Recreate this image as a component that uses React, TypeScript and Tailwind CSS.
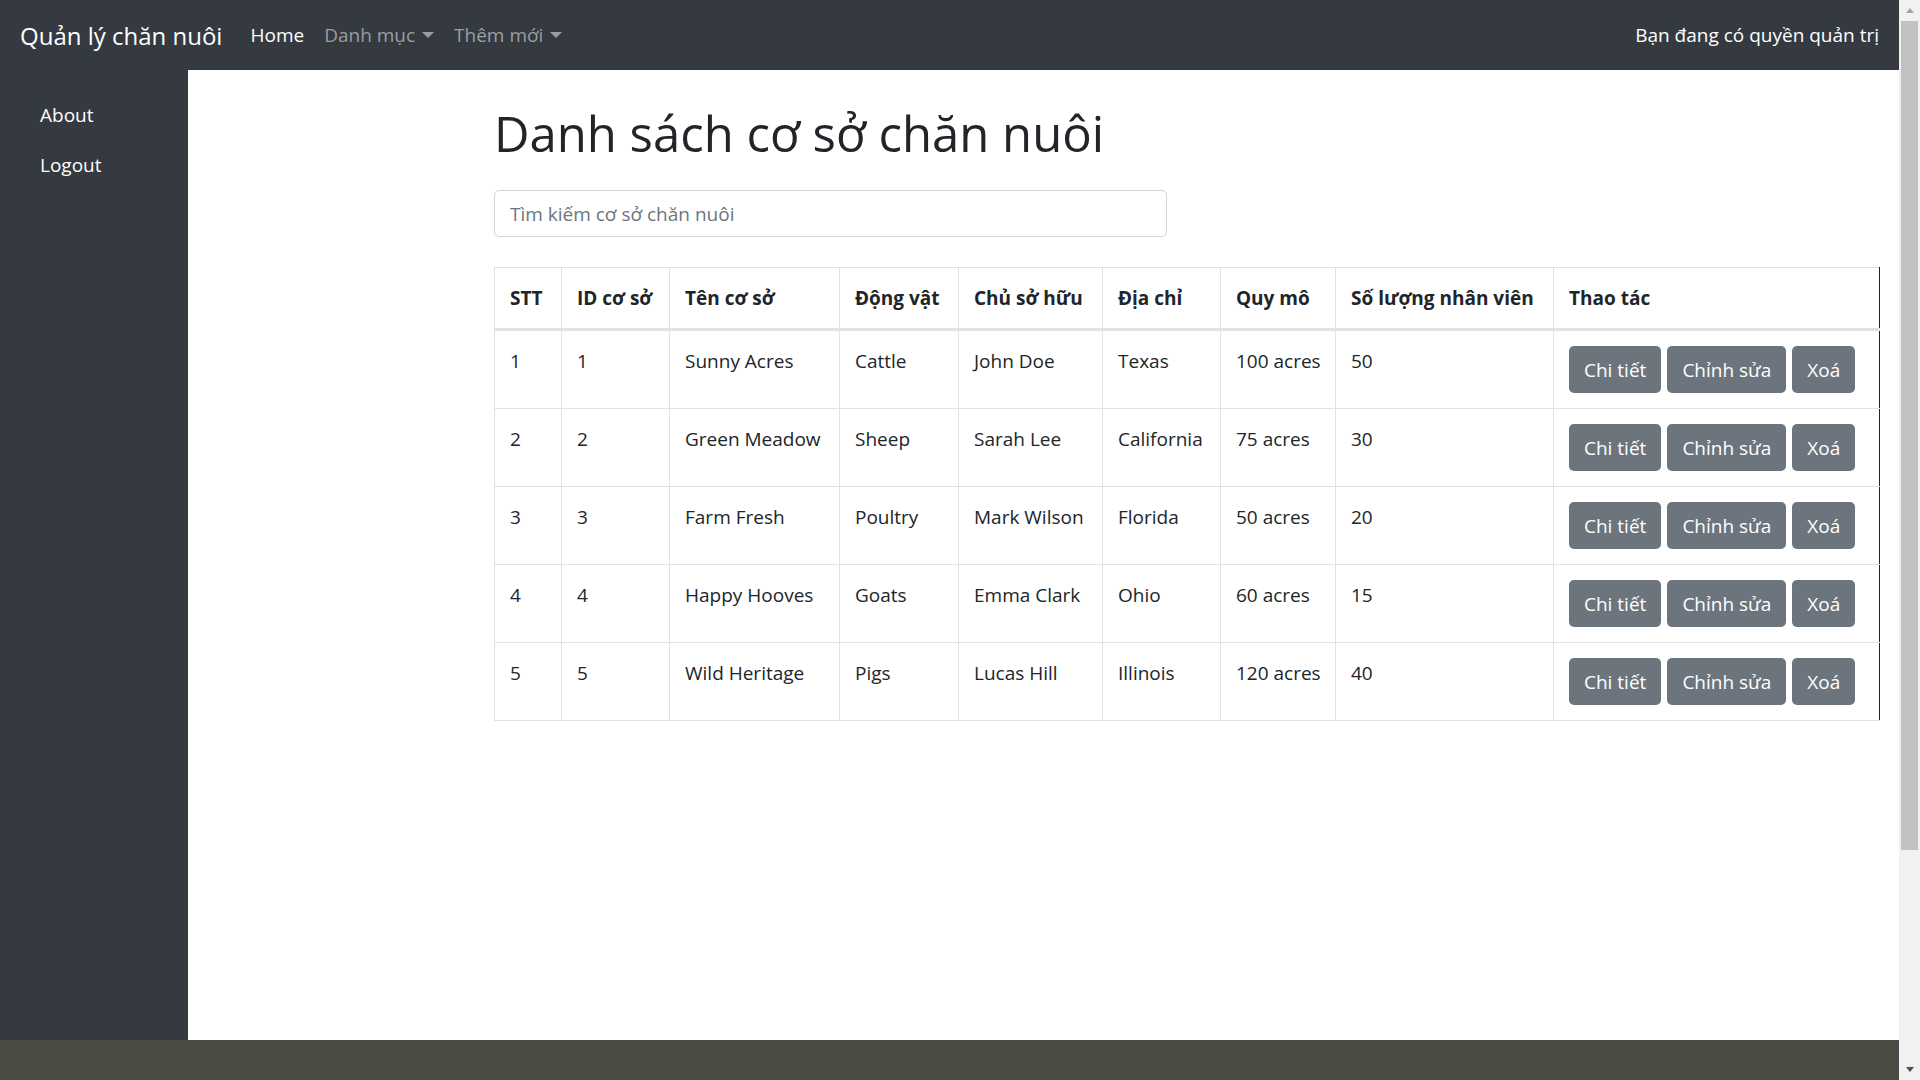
import React from 'react'

interface Farm {
  id: number
  name: string
  animal: string
  owner: string
  address: string
  scale: string
  staff: number
}

const farms: Farm[] = [
  { id: 1, name: 'Sunny Acres', animal: 'Cattle', owner: 'John Doe', address: 'Texas', scale: '100 acres', staff: 50 },
  { id: 2, name: 'Green Meadow', animal: 'Sheep', owner: 'Sarah Lee', address: 'California', scale: '75 acres', staff: 30 },
  { id: 3, name: 'Farm Fresh', animal: 'Poultry', owner: 'Mark Wilson', address: 'Florida', scale: '50 acres', staff: 20 },
  { id: 4, name: 'Happy Hooves', animal: 'Goats', owner: 'Emma Clark', address: 'Ohio', scale: '60 acres', staff: 15 },
  { id: 5, name: 'Wild Heritage', animal: 'Pigs', owner: 'Lucas Hill', address: 'Illinois', scale: '120 acres', staff: 40 },
]

const columns = [
  { label: 'STT', width: 'w-[67px]' },
  { label: 'ID cơ sở', width: 'w-[108px]' },
  { label: 'Tên cơ sở', width: 'w-[170px]' },
  { label: 'Động vật', width: 'w-[119px]' },
  { label: 'Chủ sở hữu', width: 'w-[144px]' },
  { label: 'Địa chỉ', width: 'w-[118px]' },
  { label: 'Quy mô', width: 'w-[115px]' },
  { label: 'Số lượng nhân viên', width: 'w-[218px]' },
  { label: 'Thao tác', width: 'w-[326px]' },
]

const cell = 'border border-[#dee2e6] px-[15px] pt-[15px] align-top leading-[30px] whitespace-nowrap'

function Caret() {
  return (
    <span className="ml-[7px] inline-block w-0 h-0 border-x-[6px] border-x-transparent border-t-[6px] border-t-[#9a9da0] align-middle" />
  )
}

function Navbar() {
  return (
    <nav className="h-[70px] shrink-0 bg-[#343a40] flex items-center px-[20px] text-[19px]">
      <span className="text-[24px] text-white mr-[18px] leading-[37px]">Quản lý chăn nuôi</span>
      <a className="px-[10px] text-white">Home</a>
      <a className="px-[10px] text-[#9a9da0] flex items-center">
        Danh mục <Caret />
      </a>
      <a className="px-[10px] text-[#9a9da0] flex items-center">
        Thêm mới <Caret />
      </a>
      <span className="ml-auto text-white">Bạn đang có quyền quản trị</span>
    </nav>
  )
}

function Sidebar() {
  return (
    <aside className="w-[188px] shrink-0 bg-[#343a40] pt-[20px] px-[20px] text-[19px] text-white">
      <a className="block px-[20px] py-[10px] leading-[30px]">About</a>
      <a className="block px-[20px] py-[10px] leading-[30px]">Logout</a>
    </aside>
  )
}

function ActionButton({ children }: { children: React.ReactNode }) {
  return (
    <button className="h-[47px] px-[15px] rounded-[5px] bg-[#6c757d] text-white text-[19px] leading-[30px]">
      {children}
    </button>
  )
}

function FarmTable() {
  return (
    <table className="table-fixed border-collapse w-[1386px] text-[19px] text-[#212529] border-r border-r-[#222]">
      <thead>
        <tr>
          {columns.map((col, i) => (
            <th
              key={col.label}
              className={`${col.width} border border-[#dee2e6] border-b-[3px] px-[15px] py-[15px] text-left font-bold leading-[30px] align-bottom whitespace-nowrap ${
                i === columns.length - 1 ? 'border-r-[#222]' : ''
              }`}
            >
              {col.label}
            </th>
          ))}
        </tr>
      </thead>
      <tbody>
        {farms.map((farm, i) => (
          <tr key={farm.id}>
            <td className={cell}>{i + 1}</td>
            <td className={cell}>{farm.id}</td>
            <td className={cell}>{farm.name}</td>
            <td className={cell}>{farm.animal}</td>
            <td className={cell}>{farm.owner}</td>
            <td className={cell}>{farm.address}</td>
            <td className={cell}>{farm.scale}</td>
            <td className={cell}>{farm.staff}</td>
            <td className="border border-[#dee2e6] border-r-[#222] px-[15px] py-[15px] align-top">
              <div className="flex gap-[6px]">
                <ActionButton>Chi tiết</ActionButton>
                <ActionButton>Chỉnh sửa</ActionButton>
                <ActionButton>Xoá</ActionButton>
              </div>
            </td>
          </tr>
        ))}
      </tbody>
    </table>
  )
}

function Scrollbar() {
  return (
    <div className="w-[21px] shrink-0 bg-[#f1f1f1] flex flex-col items-center">
      <div className="h-[21px] flex items-center justify-center">
        <span className="w-0 h-0 border-x-[4px] border-x-transparent border-b-[5px] border-b-[#a3a3a3]" />
      </div>
      <div className="w-[17px] h-[829px] bg-[#c1c1c1]" />
      <div className="flex-1" />
      <div className="h-[21px] flex items-center justify-center">
        <span className="w-0 h-0 border-x-[4px] border-x-transparent border-t-[5px] border-t-[#505050]" />
      </div>
    </div>
  )
}

export default function App() {
  return (
    <div
      className="h-[1080px] overflow-hidden flex"
      style={{ fontFamily: '"Open Sans", "Noto Sans", sans-serif' }}
    >
      <div className="flex-1 flex flex-col min-w-0">
        <Navbar />
        <div className="h-[970px] shrink-0 flex">
          <Sidebar />
          <main className="flex-1 bg-white pl-[306px] pt-[33px]">
            <h1 className="text-[49px] leading-[60px] font-medium text-[#212529] mb-[27px]">
              Danh sách cơ sở chăn nuôi
            </h1>
            <input
              type="text"
              placeholder="Tìm kiếm cơ sở chăn nuôi"
              className="w-[673px] h-[47px] border border-[#ced4da] rounded-[5px] px-[15px] text-[19px] text-[#495057] placeholder:text-[#6c757d] mb-[30px] outline-none"
            />
            <FarmTable />
          </main>
        </div>
        <footer className="flex-1 bg-[#4a4d43]" />
      </div>
      <Scrollbar />
    </div>
  )
}
